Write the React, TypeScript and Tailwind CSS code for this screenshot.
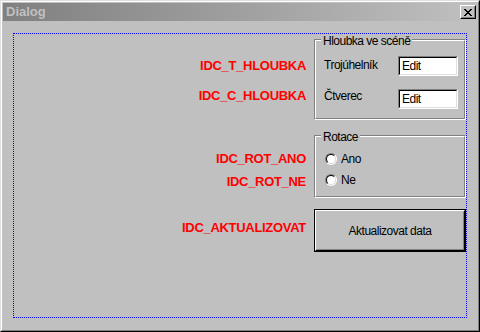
import React from "react";

function Edit() {
  return (
    <div className="w-[60px] h-[20px] border border-t-[#808080] border-l-[#808080] border-r-white border-b-white">
      <div className="w-full h-full border border-t-black border-l-black border-r-[#dfdfdf] border-b-[#dfdfdf] bg-white flex items-center pl-[2px] text-black">
        Edit
      </div>
    </div>
  );
}

function Radio({ label }: { label: string }) {
  return (
    <div className="flex items-center h-[14px]">
      <div className="w-[12px] h-[12px] rounded-full border border-t-[#808080] border-l-[#808080] border-r-white border-b-white">
        <div className="w-full h-full rounded-full border border-t-black border-l-black border-r-[#dfdfdf] border-b-[#dfdfdf] bg-white" />
      </div>
      <span className="ml-[4px] text-black">{label}</span>
    </div>
  );
}

function GroupBox({
  title,
  className,
  children,
}: {
  title: string;
  className: string;
  children: React.ReactNode;
}) {
  return (
    <div
      className={
        "relative w-[152px] border border-t-[#808080] border-l-[#808080] border-r-white border-b-white " +
        className
      }
    >
      <div className="w-full h-full border border-t-white border-l-white border-r-[#808080] border-b-[#808080]">
        {children}
      </div>
      <span className="absolute top-[-6px] left-[6px] px-[2px] bg-[#c0c0c0] text-black leading-[14px]">
        {title}
      </span>
    </div>
  );
}

function CloseGlyph() {
  const rows = [
    "XX....XX",
    ".XX..XX.",
    "..XXXX..",
    "...XX...",
    "..XXXX..",
    ".XX..XX.",
    "XX....XX",
  ];
  const rects: React.ReactNode[] = [];
  rows.forEach((r, y) =>
    r.split("").forEach((c, x) => {
      if (c === "X") rects.push(<rect key={`${x}-${y}`} x={x} y={y} width={1} height={1} fill="#000" />);
    })
  );
  return (
    <svg width="8" height="7" viewBox="0 0 8 7" shapeRendering="crispEdges">
      {rects}
    </svg>
  );
}

export default function App() {
  const redLabel =
    "text-[#ff0000] font-bold text-[13px] leading-[15px] tracking-[-0.3px] whitespace-nowrap";
  return (
    <div className="w-[480px] h-[332px] bg-[#c0c0c0] font-['Liberation_Sans',Arial,sans-serif] text-[12px] tracking-[-0.5px] leading-[14px] border border-t-[#dfdfdf] border-l-[#dfdfdf] border-r-black border-b-black">
      <div className="w-full h-full border border-t-white border-l-white border-r-[#808080] border-b-[#808080] p-px flex flex-col">
        {/* Title bar */}
        <div className="h-[18px] shrink-0 bg-gradient-to-r from-[#808080] to-[#c0c0c0] flex items-center justify-between pl-[3px] pr-[1px]">
          <span className="text-[#c0c0c0] font-bold text-[13px] tracking-normal">Dialog</span>
          <div className="w-[16px] h-[14px] border border-t-white border-l-white border-r-black border-b-black">
            <div className="w-full h-full border border-t-[#c0c0c0] border-l-[#c0c0c0] border-r-[#808080] border-b-[#808080] bg-[#c0c0c0] flex items-center justify-center">
              <CloseGlyph />
            </div>
          </div>
        </div>

        {/* Client */}
        <div className="flex-1 pt-[12px] px-[10px] pb-[11px]">
          <div className="h-[285px] border border-dotted border-[#0000ff] flex">
            {/* Left label column */}
            <div className="w-[300px] flex flex-col items-end pr-[8px]">
              <div className={redLabel + " mt-[24px]"}>IDC_T_HLOUBKA</div>
              <div className={redLabel + " mt-[15px]"}>IDC_C_HLOUBKA</div>
              <div className={redLabel + " mt-[48px]"}>IDC_ROT_ANO</div>
              <div className={redLabel + " mt-[8px]"}>IDC_ROT_NE</div>
              <div className={redLabel + " mt-[31px]"}>IDC_AKTUALIZOVAT</div>
            </div>

            {/* Right control column */}
            <div className="flex flex-col">
              <GroupBox title="Hloubka ve scéně" className="mt-[5px] h-[81px]">
                <div className="flex flex-col pt-[15px] pl-[8px] pr-[6px]">
                  <div className="flex justify-between items-start">
                    <span className="mt-[2px] text-black">Trojúhelník</span>
                    <Edit />
                  </div>
                  <div className="flex justify-between items-start mt-[13px]">
                    <span className="mt-0 text-black">Čtverec</span>
                    <Edit />
                  </div>
                </div>
              </GroupBox>

              <GroupBox title="Rotace" className="mt-[15px] h-[63px]">
                <div className="flex flex-col pt-[15px] pl-[9px] gap-[7px]">
                  <Radio label="Ano" />
                  <Radio label="Ne" />
                </div>
              </GroupBox>

              <div className="mt-[11px] w-[152px] h-[43px] border border-black">
                <div className="w-full h-full border border-t-white border-l-white border-r-black border-b-black">
                  <div className="w-full h-full border border-t-[#c0c0c0] border-l-[#c0c0c0] border-r-[#808080] border-b-[#808080] flex items-center justify-center text-black">
                    Aktualizovat data
                  </div>
                </div>
              </div>
            </div>
          </div>
        </div>
      </div>
    </div>
  );
}
